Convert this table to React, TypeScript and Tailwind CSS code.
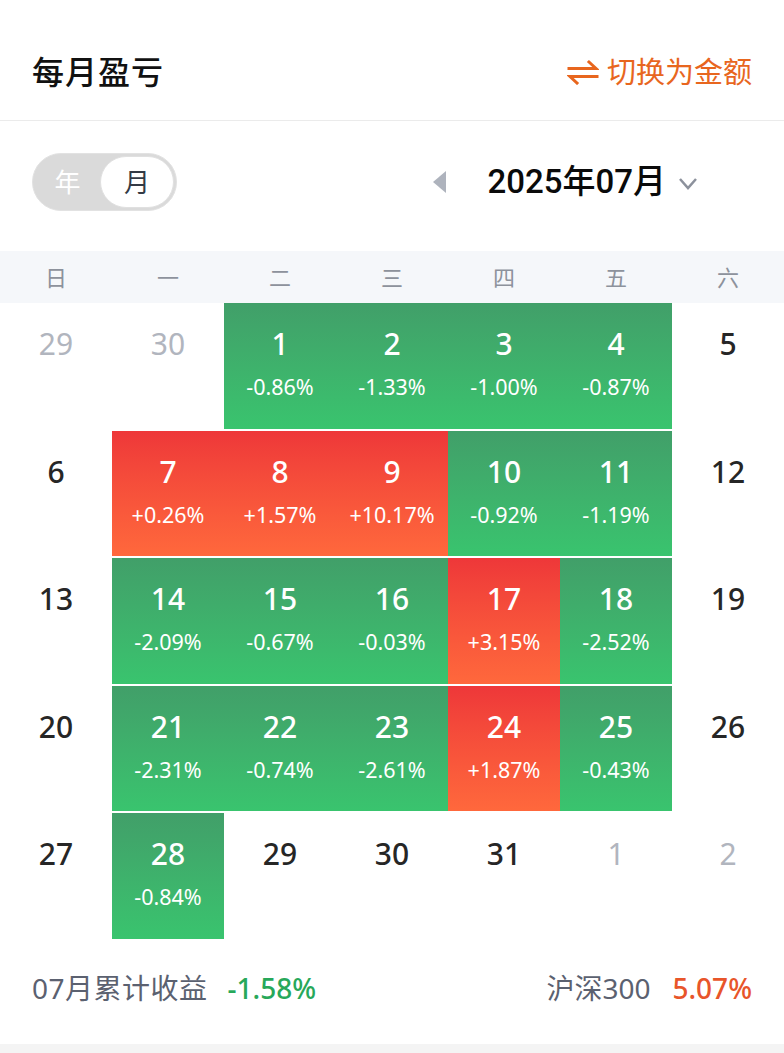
import React from "react";

type Cell = { d: number; p?: string; muted?: boolean };

const rows: Cell[][] = [
  [{ d: 29, muted: true }, { d: 30, muted: true }, { d: 1, p: "-0.86%" }, { d: 2, p: "-1.33%" }, { d: 3, p: "-1.00%" }, { d: 4, p: "-0.87%" }, { d: 5 }],
  [{ d: 6 }, { d: 7, p: "+0.26%" }, { d: 8, p: "+1.57%" }, { d: 9, p: "+10.17%" }, { d: 10, p: "-0.92%" }, { d: 11, p: "-1.19%" }, { d: 12 }],
  [{ d: 13 }, { d: 14, p: "-2.09%" }, { d: 15, p: "-0.67%" }, { d: 16, p: "-0.03%" }, { d: 17, p: "+3.15%" }, { d: 18, p: "-2.52%" }, { d: 19 }],
  [{ d: 20 }, { d: 21, p: "-2.31%" }, { d: 22, p: "-0.74%" }, { d: 23, p: "-2.61%" }, { d: 24, p: "+1.87%" }, { d: 25, p: "-0.43%" }, { d: 26 }],
  [{ d: 27 }, { d: 28, p: "-0.84%" }, { d: 29 }, { d: 30 }, { d: 31 }, { d: 1, muted: true }, { d: 2, muted: true }],
];

const weekdays = ["日", "一", "二", "三", "四", "五", "六"];

function DayCell({ c }: { c: Cell }) {
  const up = c.p?.startsWith("+");
  const bg = c.p
    ? up
      ? "bg-gradient-to-b from-[#ee3739] to-[#ff683c] text-white"
      : "bg-gradient-to-b from-[#419f69] to-[#39c46e] text-white"
    : c.muted
    ? "text-[#b1b5be]"
    : "text-[#262626]";
  return (
    <div className={`h-[125.5px] flex flex-col items-center pt-[23px] ${bg}`}>
      <div className={`text-[30px] leading-[36px] ${c.muted ? "" : "font-medium"}`}>{c.d}</div>
      {c.p && <div className="mt-[11px] text-[21.5px] leading-[28px]">{c.p}</div>}
    </div>
  );
}

export default function App() {
  return (
    <div
      className="w-[784px] h-[1053px] bg-white flex flex-col overflow-hidden"
      style={{ fontFamily: '"Noto Sans", "Noto Sans CJK SC", sans-serif' }}
    >
      {/* Header */}
      <div className="h-[121px] pt-6 flex items-center justify-between pl-8 pr-8 border-b border-[#ebebeb]">
        <div className="text-[32px] font-medium text-[#111] tracking-[1px]">每月盈亏</div>
        <div className="flex items-center gap-[8px] text-[#e8661e]">
          <svg width="32" height="26" viewBox="0 0 32 26" fill="none" stroke="#e8661e" strokeWidth="3" strokeLinecap="square">
            <path d="M2 9.5 H29 L22 3" />
            <path d="M30 17.5 H3 L10 24" />
          </svg>
          <span className="text-[29px]">切换为金额</span>
        </div>
      </div>

      {/* Controls */}
      <div className="pt-[32px] pb-[40px] pl-8 flex items-center">
        <div className="w-[145px] h-[58px] rounded-full bg-[#dadada] border border-[#e2e2e2] flex items-center p-[2px]">
          <div className="flex-1 text-center text-white text-[26px]">年</div>
          <div className="w-[74px] h-full rounded-full bg-white border border-[#e0e0e0] flex items-center justify-center text-[26px] text-[#333a45]">
            月
          </div>
        </div>
        <div className="ml-auto mr-[86px] flex items-center">
          <svg width="14" height="22" viewBox="0 0 14 22">
            <polygon points="13,0 0,11 13,22" fill="#aeb3bd" />
          </svg>
          <div
            className="ml-[40px] text-[33px] font-medium text-[#0a0a0a]"
            style={{ fontFamily: 'Roboto, "Noto Sans CJK SC", sans-serif' }}
          >
            2025年07月
          </div>
          <svg className="ml-[12px] mt-[4px]" width="20" height="14" viewBox="0 0 20 14" fill="none" stroke="#8c919c" strokeWidth="2.5">
            <polyline points="2,2 10,11 18,2" />
          </svg>
        </div>
      </div>

      {/* Weekdays */}
      <div className="h-[52px] bg-[#f5f7fa] grid grid-cols-7 items-center">
        {weekdays.map((w) => (
          <div key={w} className="text-center text-[22px] text-[#8d929c]">
            {w}
          </div>
        ))}
      </div>

      {/* Calendar */}
      <div className="flex flex-col gap-[2px]">
        {rows.map((r, i) => (
          <div key={i} className="grid grid-cols-7">
            {r.map((c, j) => (
              <DayCell key={j} c={c} />
            ))}
          </div>
        ))}
      </div>

      {/* Footer */}
      <div className="h-[105px] pb-[6px] flex items-center justify-between px-8 text-[28px]">
        <div className="flex items-center">
          <span className="text-[#5b6170] tracking-[0.5px]">07月累计收益</span>
          <span className="ml-[20px] text-[#27a85a] font-medium">-1.58%</span>
        </div>
        <div className="flex items-center">
          <span className="text-[#5b6170]">沪深300</span>
          <span className="ml-[22px] text-[#e8552a] font-medium">5.07%</span>
        </div>
      </div>
      <div className="flex-1 bg-[#f4f4f4]" />
    </div>
  );
}
